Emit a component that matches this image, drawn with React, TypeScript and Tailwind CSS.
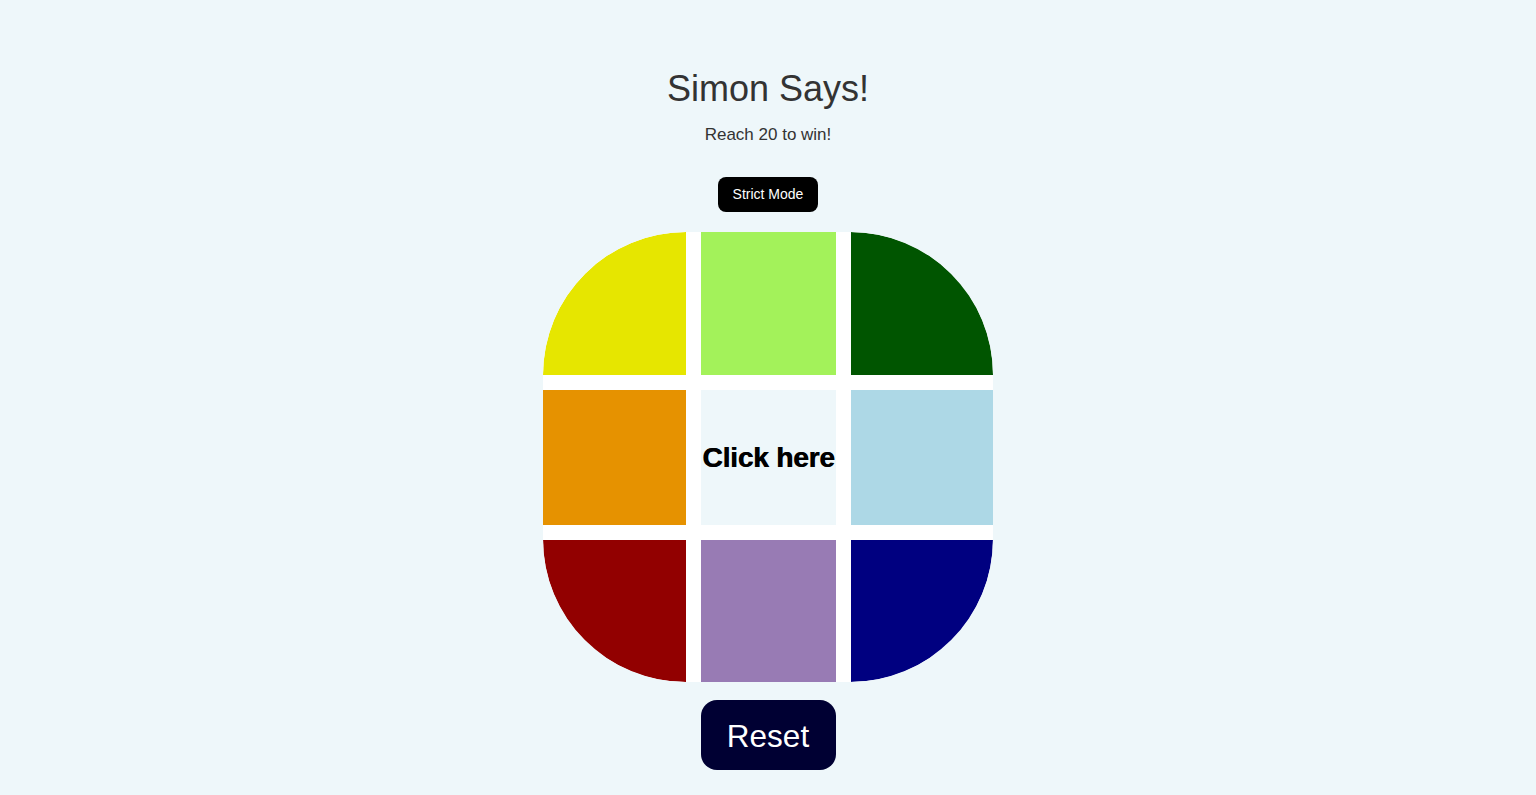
import React from "react"

const cells = [
  { color: "bg-[#e6e600]", corner: "rounded-tl-[143px]" },
  { color: "bg-[#a3f25a]", corner: "" },
  { color: "bg-[#005500]", corner: "rounded-tr-[143px]" },
  { color: "bg-[#e69200]", corner: "" },
  { color: "center", corner: "" },
  { color: "bg-[#add8e6]", corner: "" },
  { color: "bg-[#920000]", corner: "rounded-bl-[143px]" },
  { color: "bg-[#987bb4]", corner: "" },
  { color: "bg-[#000080]", corner: "rounded-br-[143px]" },
]

export default function App() {
  return (
    <div className="min-h-screen bg-[#eef7fa] flex flex-col items-center pt-[68px] font-['Liberation_Sans',Arial,sans-serif]">
      <h1 className="text-[36px] leading-[41px] text-[#333]">Simon Says!</h1>
      <p className="mt-[16px] text-[17px] leading-[20px] text-[#333]">Reach 20 to win!</p>
      <button className="mt-[32px] w-[100px] h-[35px] rounded-[8px] bg-black text-white text-[14px]">
        Strict Mode
      </button>

      <div className="mt-[20px] w-[450px] h-[450px] grid grid-cols-[143px_135px_142px] grid-rows-[143px_135px_142px] gap-[15px] bg-white rounded-[143px] overflow-hidden">
        {cells.map((c, i) =>
          c.color === "center" ? (
            <div
              key={i}
              className="bg-[#eef7fa] flex items-center justify-center font-bold text-[28px] text-black tracking-[-0.15px] [text-shadow:0.6px_0_0_#000]"
            >
              Click here
            </div>
          ) : (
            <div key={i} className={`${c.color} ${c.corner}`} />
          )
        )}
      </div>

      <button className="mt-[18px] w-[135px] h-[70px] pt-[4px] rounded-[16px] bg-[#000033] text-white text-[31.5px]">
        Reset
      </button>
    </div>
  )
}
